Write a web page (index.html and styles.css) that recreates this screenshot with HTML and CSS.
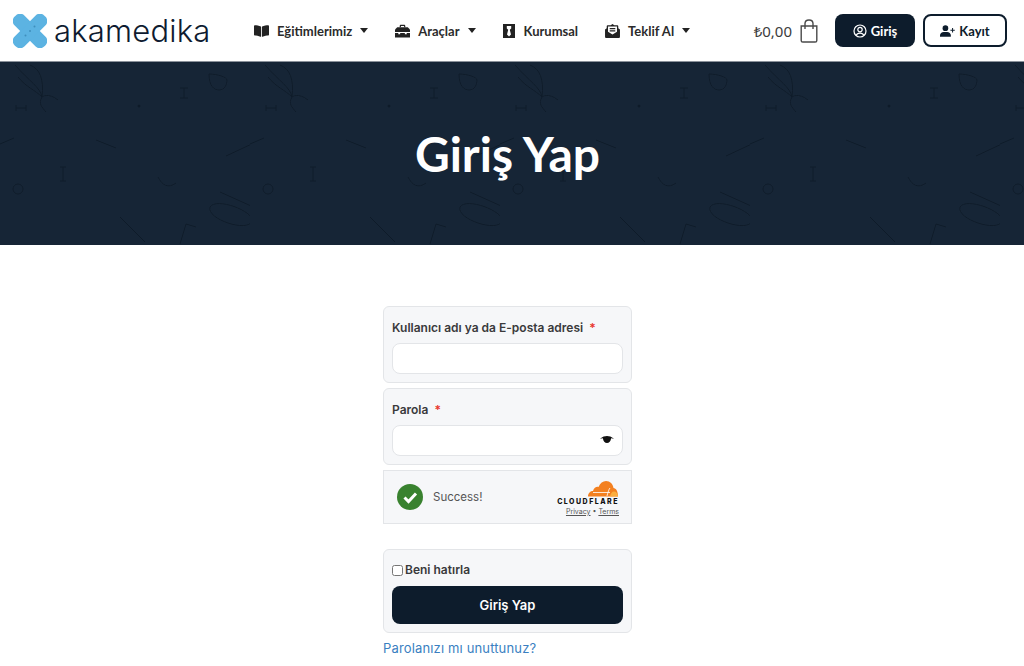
FILE: index.html
```html
<!DOCTYPE html>
<html lang="tr">
  <head>
    <meta charset="UTF-8" />
    <meta name="viewport" content="width=device-width, initial-scale=1.0" />
    <title>Giriş Yap - Akamedika</title>
    <link rel="stylesheet" href="styles.css">
  </head>
  <body>
    <header class="site-header">
      <a class="logo" href="#">
        <svg class="logo-mark" viewBox="0 0 34 34">
          <g fill="#5cb3e2">
            <rect x="-4" y="10" width="42" height="14" rx="6" transform="rotate(45 17 17)" />
            <rect x="-4" y="10" width="42" height="14" rx="6" transform="rotate(-45 17 17)" />
          </g>
          <g fill="#3f8fbd">
            <circle cx="12.500" cy="21.500" r="1" />
            <circle cx="17" cy="17" r="1" />
            <circle cx="21.500" cy="12.500" r="1" />
          </g>
        </svg>
        <span class="logo-text">akamedika</span>
      </a>

      <nav class="main-nav">
        <a class="nav-item" href="#">
          <svg class="nav-icon" viewBox="0 0 576 512">
            <path d="M542.22 32.05c-54.8 3.11-163.72 14.43-230.96 55.59-4.64 2.84-7.27 7.89-7.27 13.17v363.87c0 11.55 12.63 18.85 23.28 13.49 69.18-34.82 169.23-44.32 218.7-46.92 16.89-.89 30.02-14.43 30.02-30.66V62.75c.01-17.71-15.35-31.74-33.77-30.7zM264.73 87.64C197.5 46.48 88.58 35.17 33.78 32.05 15.36 31.01 0 45.04 0 62.75V400.6c0 16.24 13.13 29.78 30.02 30.66 49.49 2.6 149.59 12.11 218.77 46.95 10.62 5.35 23.21-1.94 23.21-13.46V100.63c0-5.29-2.62-10.14-7.27-12.99z" />
          </svg>
          <span>Eğitimlerimiz</span>
          <span class="caret"></span>
        </a>
        <a class="nav-item" href="#">
          <svg class="nav-icon" viewBox="0 0 16 14">
            <path d="M5 3V1.600C5 .8 5.600.3 6.300.3h3.400c.7 0 1.300.5 1.300 1.300V3H9.700V1.600H6.300V3z" />
            <path d="M2.400 3h11.200L16 5.500V8H0V5.500z" />
            <path d="M0 9h3.500v1.400h2V9h5v1.400h2V9H16v5H0z" />
          </svg>
          <span>Araçlar</span>
          <span class="caret"></span>
        </a>
        <a class="nav-item" href="#">
          <svg class="nav-icon nav-icon-small" viewBox="0 0 12 14">
            <path fill-rule="evenodd" d="M0 0h12v14H0zM3.800 2v2.600l1.400 1.200L4 10.500 6 12.500l2-2-1.200-4.700 1.400-1.200V2z" />
          </svg>
          <span>Kurumsal</span>
        </a>
        <a class="nav-item" href="#">
          <svg class="nav-icon" viewBox="0 0 16 15">
            <path fill-rule="evenodd" d="M8 0l2 1.400h3.200c.6 0 1 .4 1 1v2.200L16 6v7.600c0 .8-.6 1.400-1.400 1.400H1.400C.6 15 0 14.400 0 13.600V6l1.800-1.400V2.400c0-.6.4-1 1-1H6zM3.200 2.800v5.400L8 11.200l4.800-3V2.800zM5 4.400h6v1.200H5zm0 2.400h6V8H5z" />
          </svg>
          <span>Teklif Al</span>
          <span class="caret"></span>
        </a>
      </nav>

      <div class="header-actions">
        <a class="cart" href="#">
          <span class="cart-total">₺0,00</span>
          <svg class="cart-icon" viewBox="0 0 18 24">
            <path d="M1.200 7h15.600v14.400c0 1-.7 1.600-1.600 1.600H2.800c-1 0-1.600-.6-1.600-1.600z" />
            <path d="M5 10V4.600C5 2.400 6.700 1 9 1s4 1.400 4 3.600V10" />
          </svg>
        </a>
        <a class="btn btn-dark" href="#">
          <svg class="btn-icon" viewBox="0 0 14 14">
            <circle class="btn-ring" cx="7" cy="7" r="6" />
            <circle class="btn-ring" cx="7" cy="5.600" r="2.200" />
            <path class="btn-ring" d="M3.200 11.400c.6-1.600 2-2.200 3.800-2.200s3.200.6 3.800 2.200" />
          </svg>
          Giriş
        </a>
        <a class="btn btn-light" href="#">
          <svg class="btn-icon btn-icon-wide" viewBox="0 0 18 14">
            <circle cx="6.500" cy="3.600" r="3.400" />
            <path d="M0 14v-1.600C0 9.800 2 8.200 4.400 8.200h4.200c2.400 0 4.400 1.600 4.400 4.200V14z" />
            <path d="M14.500 3.500h1.200v2h2v1.200h-2v2h-1.200v-2h-2V5.500h2z" />
          </svg>
          Kayıt
        </a>
      </div>
    </header>

    <section class="hero">
      <svg class="hero-pattern" width="100%" height="100%">
        <defs>
          <pattern id="med-tile" width="250" height="183" patternUnits="userSpaceOnUse">
            <g fill="none" stroke="#0e1b29" stroke-width="1">
              <path d="M15 3C30 20 40 25 42 35 35 28 26 25 18 15M58 38C48 30 42 35 42 35 38 42 42 45 46 50" />
              <path d="M30 3c10 4 14 14 12 32" />
              <path d="M209 12c0 12 5 16 10 16 6 0 8-6 8-10 0-3-10-6-18-6z" />
              <path d="M184 26v10M180 26h8M180 36h8" />
              <path d="M16 46h10M16 43v6M26 43v6" />
              <path d="M96 78l20 8M0 82l14-6" />
              <path d="M226 94l30-14" />
              <path d="M63 105v14M60 105h6M60 119h6" />
              <path d="M158 115c4 8 10 12 18 6" />
              <circle cx="18" cy="127" r="5" />
              <path d="M220 130l40 18M210 145c6-10 44 4 42 14-4 12-46-2-42-14z" />
              <path d="M120 155l25 25" />
              <path d="M186 162l-6 20M186 162l10 3" />
            </g>
            <circle cx="139" cy="44" r="1.500" fill="#0e1b29" />
          </pattern>
        </defs>
        <rect width="100%" height="100%" fill="url(#med-tile)" />
      </svg>
      <h1 class="hero-title">Giriş Yap</h1>
    </section>

    <main class="login">
      <form class="login-form">
        <div class="field-box">
          <label class="field-label" for="username">Kullanıcı adı ya da E-posta adresi <span class="required">*</span></label>
          <input class="field-input" id="username" type="text" />
        </div>

        <div class="field-box">
          <label class="field-label" for="password">Parola <span class="required">*</span></label>
          <div class="password-wrap">
            <input class="field-input" id="password" type="password" />
            <svg class="eye-icon" viewBox="0 0 16 9">
              <path d="M0 3.200C3 .8 5.500 0 8 0s5 .8 8 3.200c-1-.2-2.200-.5-3.300-.7C12.400 5.800 10.400 8 8 8S3.600 5.800 3.300 2.500C2.200 2.700 1 3 0 3.200z" />
            </svg>
          </div>
        </div>

        <div class="captcha">
          <div class="captcha-status">
            <svg class="captcha-check" viewBox="0 0 26 26">
              <circle cx="13" cy="13" r="13" fill="#39822f" />
              <path d="M7.500 13.500l4 4 7.500-8" fill="none" stroke="#fff" stroke-width="3" />
            </svg>
            <span>Success!</span>
          </div>
          <div class="captcha-brand">
            <svg class="cf-cloud" viewBox="0 0 30 16">
              <path fill="#f38020" d="M0 15.500C0 12 2.500 10 5 10c1-4 4-4.500 5.500-4C12 2 15 0 18 0c4 0 7 3 7.500 7 2.500.2 4.500 3 4.500 8.500z" />
              <path fill="#faae40" d="M22 15.500c.5-3 2-5 4-5 2 0 4 2 4 5z" />
              <path fill="none" stroke="#fff" stroke-width=".8" d="M5 11.500h17M19 15c1-4 2-7 3-8" />
            </svg>
            <div class="cf-name">CLOUDFLARE</div>
            <div class="cf-links"><a href="#">Privacy</a> <span>•</span> <a href="#">Terms</a></div>
          </div>
        </div>

        <div class="field-box submit-box">
          <label class="remember"><input class="remember-check" type="checkbox" /> Beni hatırla</label>
          <button class="submit-btn" type="button">Giriş Yap</button>
        </div>

        <a class="lost-link" href="#">Parolanızı mı unuttunuz?</a>
      </form>
    </main>
  </body>
</html>
```

FILE: styles.css
```css
* {
  margin: 0;
  padding: 0;
  box-sizing: border-box;
}

body {
  font-family: "Inter", "Liberation Sans", sans-serif;
  background-color: #fff;
  color: #3a3a3a;
  overflow: hidden;
  height: 666px;
}

a {
  text-decoration: none;
  color: inherit;
}

.site-header {
  height: 61px;
  display: flex;
  align-items: center;
  padding: 0 17px 0 13px;
  background-color: #fff;
}

.logo {
  display: flex;
  align-items: center;
  gap: 7px;
  width: 241px;
}

.logo-mark {
  width: 34px;
  height: 34px;
}

.logo-text {
  font-family: "Inter", sans-serif;
  font-size: 31px;
  font-weight: 300;
  letter-spacing: 0.2px;
  color: #0e1b30;
  line-height: 34px;
}

.main-nav {
  display: flex;
  align-items: center;
  gap: 27px;
}

.nav-item {
  display: flex;
  align-items: center;
  gap: 8px;
  font-family: "Lato", sans-serif;
  font-size: 13px;
  font-weight: 700;
  color: #2b2b2b;
}

.nav-icon {
  width: 15px;
  height: 14px;
  fill: #222;
}

.nav-icon-small {
  width: 12px;
  margin-right: 1px;
}

.caret {
  width: 0;
  height: 0;
  border-left: 4.500px solid transparent;
  border-right: 4.500px solid transparent;
  border-top: 5px solid #222;
}

.header-actions {
  display: flex;
  align-items: center;
  margin-left: auto;
}

.cart {
  display: flex;
  align-items: center;
  gap: 8px;
  margin-right: 17px;
}

.cart-total {
  font-family: "Noto Sans", sans-serif;
  font-size: 15px;
  color: #3c3c3c;
}

.cart-icon {
  width: 18px;
  height: 24px;
  fill: none;
  stroke: #4a4a4a;
  stroke-width: 1.400;
}

.btn {
  display: flex;
  align-items: center;
  justify-content: center;
  gap: 4px;
  height: 33px;
  border-radius: 8px;
  font-family: "Lato", sans-serif;
  font-size: 13px;
  font-weight: 700;
}

.btn-dark {
  width: 80px;
  background-color: #0d1c2c;
  color: #fff;
  margin-right: 8px;
}

.btn-light {
  width: 84px;
  background-color: #fff;
  border: 2px solid #0d1c2c;
  color: #0d1c2c;
}

.btn-icon {
  width: 14px;
  height: 14px;
  fill: #0d1c2c;
}

.btn-icon-wide {
  width: 15px;
  height: 12px;
}

.btn-ring {
  fill: none;
  stroke: #fff;
  stroke-width: 1.200;
}

.hero {
  position: relative;
  height: 184px;
  background-color: #162536;
  border-top: 1px solid #8b929b;
  display: flex;
  align-items: center;
  justify-content: center;
  padding-right: 9px;
}

.hero-pattern {
  position: absolute;
  top: 0;
  left: 0;
}

.hero-title {
  position: relative;
  font-family: "Lato", sans-serif;
  font-size: 48px;
  font-weight: 700;
  color: #fff;
  line-height: 1;
  margin-top: 1px;
}

.login {
  display: flex;
  justify-content: center;
  padding: 61px 9px 0 0;
}

.login-form {
  width: 249px;
  display: flex;
  flex-direction: column;
}

.field-box {
  background-color: #f6f7f9;
  border: 1px solid #e3e5e8;
  border-radius: 6px;
  padding: 13px 8px 8px;
  margin-bottom: 5px;
}

.field-label {
  display: block;
  font-size: 12px;
  font-weight: 600;
  line-height: 16px;
  color: #3a3a3c;
  margin-bottom: 7px;
}

.required {
  color: #e8352b;
  margin-left: 3px;
}

.field-input {
  display: block;
  width: 100%;
  height: 31px;
  background-color: #fff;
  border: 1px solid #e3e5e8;
  border-radius: 8px;
  outline: none;
}

.password-wrap {
  position: relative;
}

.eye-icon {
  position: absolute;
  top: 11px;
  right: 9px;
  width: 14px;
  height: 8px;
  fill: #111;
}

.captcha {
  height: 54px;
  background-color: #f6f7f9;
  border: 1px solid #e3e5e8;
  display: flex;
  align-items: center;
  justify-content: space-between;
  padding: 0 12px 0 13px;
  margin-bottom: 25px;
}

.captcha-status {
  display: flex;
  align-items: center;
  gap: 10px;
  font-size: 11.500px;
  color: #555;
}

.captcha-check {
  width: 26px;
  height: 26px;
}

.captcha-brand {
  display: flex;
  flex-direction: column;
  align-items: flex-end;
  margin-top: 3px;
}

.cf-cloud {
  width: 32px;
  height: 16px;
}

.cf-name {
  font-size: 7px;
  font-weight: 800;
  letter-spacing: 1.500px;
  line-height: 9px;
  color: #111;
}

.cf-links {
  font-size: 7px;
  line-height: 11px;
  color: #555;
}

.cf-links a {
  text-decoration: underline;
}

.submit-box {
  padding: 12px 8px 8px;
  margin-bottom: 6px;
}

.remember {
  display: flex;
  align-items: center;
  gap: 2px;
  font-size: 12px;
  font-weight: 600;
  line-height: 16px;
  color: #3a3a3c;
  margin-bottom: 8px;
}

.remember-check {
  width: 11px;
  height: 11px;
}

.submit-btn {
  display: block;
  width: 100%;
  height: 38px;
  background-color: #0d1c2c;
  border: none;
  border-radius: 8px;
  font-family: "Inter", sans-serif;
  font-size: 13px;
  font-weight: 600;
  color: #fff;
}

.lost-link {
  font-size: 13px;
  line-height: 18px;
  letter-spacing: 0.150px;
  color: #3a7fc1;
}
```
